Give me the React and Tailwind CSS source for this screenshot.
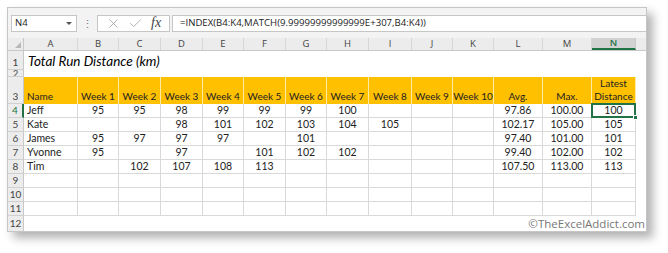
import { X, Check } from 'lucide-react';

const cols = ['A', 'B', 'C', 'D', 'E', 'F', 'G', 'H', 'I', 'J', 'K', 'L', 'M', 'N'];
const widths = ['w-[54px]', 'w-[41px]', 'w-[42px]', 'w-[42px]', 'w-[41px]', 'w-[42px]', 'w-[41px]', 'w-[42px]', 'w-[43px]', 'w-[41px]', 'w-[41px]', 'w-[49px]', 'w-[49px]', 'w-[44px]'];

const header = ['Name', 'Week 1', 'Week 2', 'Week 3', 'Week 4', 'Week 5', 'Week 6', 'Week 7', 'Week 8', 'Week 9', 'Week 10', 'Avg.', 'Max.', null];

const rows = [
  ['Jeff', '95', '95', '98', '99', '99', '99', '100', '', '', '', '97.86', '100.00', '100'],
  ['Kate', '', '', '98', '101', '102', '103', '104', '105', '', '', '102.17', '105.00', '105'],
  ['James', '95', '97', '97', '97', '', '101', '', '', '', '', '97.40', '101.00', '101'],
  ['Yvonne', '95', '', '97', '', '101', '102', '102', '', '', '', '99.40', '102.00', '102'],
  ['Tim', '', '102', '107', '108', '113', '', '', '', '', '', '107.50', '113.00', '113'],
  ['', '', '', '', '', '', '', '', '', '', '', '', '', ''],
  ['', '', '', '', '', '', '', '', '', '', '', '', '', ''],
  ['', '', '', '', '', '', '', '', '', '', '', '', '', ''],
];

function RowHead({ n, h, active }) {
  return (
    <div className={`w-[16px] shrink-0 ${h} flex items-end justify-center border-b border-[#d0d0d0] bg-[#ececec] text-[10px] leading-[13px] ${active ? 'text-[#217346] border-r-2 border-r-[#217346] bg-[#d6d6d6]' : 'text-[#444] border-r border-r-[#c8c8c8]'}`}>
      {n}
    </div>
  );
}

export default function App() {
  return (
    <div className="w-[668px] h-[253px] bg-white pl-[7px] pt-[7px] font-['Lato',sans-serif]">
      <div className="w-[640px] h-[225px] border border-[#c6c6c6] bg-white shadow-[6px_6px_9px_rgba(0,0,0,0.3)] overflow-hidden flex flex-col">
        {/* formula bar */}
        <div className="h-[30px] shrink-0 bg-[#f3f3f3] flex items-center pl-[3px]">
          <div className="w-[66px] h-[17px] bg-white border border-[#c6c6c6] flex items-center justify-between pl-[3px] pr-[4px] font-['Open_Sans',sans-serif] text-[9.5px] text-[#222]">
            <span>N4</span>
            <span className="w-0 h-0 border-l-[3px] border-r-[3px] border-t-[3px] border-l-transparent border-r-transparent border-t-[#555]" />
          </div>
          <div className="w-[20px] flex justify-center text-[#777] text-[11px] leading-none">⋮</div>
          <div className="w-[73px] h-[17px] bg-white border border-[#c6c6c6] flex items-center justify-around px-[4px]">
            <X size={15} strokeWidth={1.2} className="text-[#9a9a9a]" />
            <Check size={15} strokeWidth={1.2} className="text-[#9a9a9a]" />
            <span className="font-['Liberation_Serif',serif] italic text-[14px] leading-none text-[#444]">fx</span>
          </div>
          <div className="ml-[2px] flex-1 h-[17px] bg-white border border-[#c6c6c6] border-r-0 flex items-center pl-[7px] font-['Open_Sans',sans-serif] text-[9.6px] text-[#222] whitespace-nowrap">
            =INDEX(B4:K4,MATCH(9.99999999999999E+307,B4:K4))
          </div>
        </div>

        {/* column headers */}
        <div className="h-[13px] shrink-0 flex bg-[#ececec] border-b border-[#c8c8c8]">
          <div className="w-[16px] shrink-0 border-r border-[#c8c8c8] flex items-end justify-end pr-[2px] pb-[2px]">
            <svg width="6" height="6" viewBox="0 0 6 6"><path d="M6 0V6H0Z" fill="#b8b8b8" /></svg>
          </div>
          {cols.map((c, i) => (
            <div key={c} className={`${widths[i]} shrink-0 flex items-center justify-center text-[9.5px] font-['Open_Sans',sans-serif] ${c === 'N' ? 'bg-[#d2d2d2] text-[#217346] font-semibold border-b-2 border-[#217346] border-r border-r-[#c8c8c8]' : 'text-[#444] border-r border-[#d6d6d6]'}`}>
              {c}
            </div>
          ))}
          <div className="flex-1" />
        </div>

        {/* row 1 */}
        <div className="h-[19px] shrink-0 flex">
          <RowHead n="1" h="h-[19px]" />
          <div className="pl-[4px] flex items-end text-[13.5px] leading-[17px] italic text-black whitespace-nowrap">Total Run Distance (km)</div>
        </div>
        {/* row 2 */}
        <div className="h-[7px] shrink-0 flex">
          <div className="w-[16px] h-[7px] shrink-0 overflow-hidden flex justify-center items-start border-r border-[#c8c8c8] border-b border-b-[#d0d0d0] bg-[#ececec] text-[9px] leading-[8px] text-[#444]">2</div>
        </div>
        {/* row 3 header */}
        <div className="h-[27px] shrink-0 flex">
          <RowHead n="3" h="h-[27px]" />
          {header.map((t, i) => (
            <div key={i} className={`${widths[i]} shrink-0 bg-[#ffc000] border-r border-[#ffe9a6] flex flex-col justify-end pb-[1px] text-[10px] leading-[13px] text-[#222] whitespace-nowrap ${i === 0 ? 'items-start pl-[3px]' : 'items-center'}`}>
              {t === null ? (
                <>
                  <span>Latest</span>
                  <span>Distance</span>
                </>
              ) : (
                <span>{t}</span>
              )}
            </div>
          ))}
        </div>
        {/* data rows */}
        {rows.map((r, ri) => (
          <div key={ri} className="h-[14px] shrink-0 flex">
            <RowHead n={String(ri + 4)} h="h-[14px]" active={ri === 0} />
            {r.map((v, i) => (
              <div key={i} className={`${widths[i]} h-[14px] shrink-0 border-r border-b border-[#d9d9d9] text-[10.5px] leading-[13px] text-[#222] flex ${i === 0 ? 'pl-[3px] justify-start' : 'justify-center'} ${ri === 0 && i === 13 ? 'relative' : ''}`}>
                {v}
                {ri === 0 && i === 13 && (
                  <>
                    <div className="absolute left-[-1px] top-[-1px] w-[45px] h-[15px] border-2 border-[#217346]" />
                    <div className="absolute right-[-3px] bottom-[-3px] w-[5px] h-[5px] bg-[#217346] border border-white" />
                  </>
                )}
              </div>
            ))}
          </div>
        ))}
        {/* row 12 */}
        <div className="flex-1 flex">
          <div className="w-[16px] shrink-0 flex items-start justify-center pt-[1px] border-r border-[#c8c8c8] bg-[#ececec] text-[10px] leading-[13px] text-[#444]">12</div>
          <div className="flex-1 flex justify-end items-start pr-px pt-[1px] font-['Open_Sans',sans-serif] text-[11.5px] leading-[14px] text-[#777]">
            ©TheExcelAddict.com
          </div>
        </div>
      </div>
    </div>
  );
}
